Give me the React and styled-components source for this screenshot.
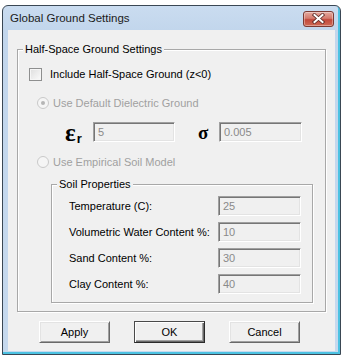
import React from 'react'
import styled, { createGlobalStyle } from 'styled-components'

const GlobalStyle = createGlobalStyle`
html, body {
margin:0;
padding:0;
background:#fff;
}
body {
font-family:"Liberation Sans", Arial, sans-serif;
font-size:11px;
color:#000;
}
`

const Window = styled.div`
box-sizing:border-box;
width:339px;
height:350px;
margin:5px 0 0 2px;
display:flex;
flex-direction:column;
border:1px solid #3a4754;
border-radius:6px 6px 0 0;
background:linear-gradient(#cadcf0, #c2d6ec 24px, #c6d9ee);
box-shadow:inset -2px -2px 0 #4cc2e2;
padding:0 5px 3px 5px;
`

const TitleBar = styled.div`
height:24px;
display:flex;
align-items:center;
justify-content:space-between;
padding:0 1px 0 2px;
`

const Title = styled.div`
font-size:11.5px;
color:#1b1b1b;
`

const CloseButton = styled.div`
box-sizing:border-box;
width:31px;
height:16px;
margin-top:1px;
display:flex;
align-items:center;
justify-content:center;
border:1px solid #7b3a33;
border-radius:3px;
background:linear-gradient(#e4a99f, #d47a6d 45%, #c2483b 55%, #cf6a55);
box-shadow:inset 0 0 0 1px rgba(255,255,255,0.35);
`

const Client = styled.div`
flex:1;
display:flex;
flex-direction:column;
background:#f0f0f0;
padding:13px 9px 0 9px;
`

const Group = styled.fieldset`
margin:${({ inner }) => inner ? '6px 12px 0 33px' : '0'};
padding:0;
border:1px solid #a8a8a8;
box-shadow:inset 1px 1px 0 #fff, 1px 1px 0 #fff;
min-width:0;
`

const Legend = styled.legend`
margin-left:5px;
padding:0 2px;
line-height:13px;
background:#f0f0f0;
`

const GroupBody = styled.div`
display:flex;
flex-direction:column;
padding:${({ inner }) => inner ? '5px 11px 8px 16px' : '8px 0 8px 0'};
`

const Row = styled.div`
display:flex;
align-items:center;
height:20px;
margin-top:${({ top }) => top || 0}px;
margin-left:${({ left }) => left || 0}px;
color:${({ disabled }) => disabled ? '#a0a0a0' : '#000'};
`

const CheckBox = styled.span`
box-sizing:border-box;
width:13px;
height:13px;
margin-right:8px;
border:1px solid #8e8f8f;
background:linear-gradient(135deg, #dedede, #fbfbfb);
box-shadow:inset 0 0 0 1px #f6f6f6;
`

const Radio = styled.span`
box-sizing:border-box;
width:12px;
height:12px;
margin-right:4px;
border-radius:50%;
border:1px solid #c9c9c9;
background:#f5f5f5;
display:flex;
align-items:center;
justify-content:center;
&::after{
content:"";
width:4px;
height:4px;
border-radius:50%;
background:${({ checked }) => checked ? '#b5b5b5' : 'transparent'};
}
`

const Symbol = styled.span`
box-sizing:border-box;
width:${({ w }) => w}px;
margin-left:${({ left }) => left || 0}px;
display:flex;
align-items:baseline;
font-family:"Liberation Serif", "DejaVu Serif", serif;
font-weight:bold;
color:#000;
line-height:1;
`

const Epsilon = styled.span`
font-size:25px;
`

const Sub = styled.span`
font-family:"Liberation Sans", Arial, sans-serif;
font-size:13px;
margin-left:1px;
position:relative;
top:2px;
`

const Sigma = styled.span`
font-size:19px;
padding-left:1px;
`

const Field = styled.div`
box-sizing:border-box;
width:${({ w }) => w}px;
height:20px;
display:flex;
align-items:center;
padding-left:4px;
background:#f0f0f0;
color:#8a8a8a;
border-top:1px solid #a0a0a0;
border-left:1px solid #a0a0a0;
border-bottom:1px solid #fff;
border-right:1px solid #fff;
box-shadow:inset 1px 1px 0 #767676, inset -1px -1px 0 #e3e3e3;
`

const PropRow = styled.div`
display:flex;
align-items:center;
justify-content:space-between;
height:20px;
margin-top:${({ first }) => first ? 0 : 6}px;
padding-left:1px;
`

const ButtonBar = styled.div`
display:flex;
gap:24px;
padding:9px 0 0 22px;
`

const Button = styled.div`
box-sizing:border-box;
width:71px;
height:22px;
display:flex;
align-items:center;
justify-content:center;
background:#f0f0f0;
border-top:1px solid ${({ primary }) => primary ? '#4a4a4a' : '#fff'};
border-left:1px solid ${({ primary }) => primary ? '#4a4a4a' : '#fff'};
border-bottom:1px solid ${({ primary }) => primary ? '#2a2a2a' : '#696969'};
border-right:1px solid ${({ primary }) => primary ? '#2a2a2a' : '#696969'};
box-shadow:${({ primary }) => primary
    ? 'inset 1px 1px 0 #fff, inset -1px -1px 0 #696969, inset -2px -2px 0 #a0a0a0'
    : 'inset 1px 1px 0 #e3e3e3, inset -1px -1px 0 #a0a0a0'};
`

const soilProps = [
    { label: "Temperature (C):", value: "25" },
    { label: "Volumetric Water Content %:", value: "10" },
    { label: "Sand Content %:", value: "30" },
    { label: "Clay Content %:", value: "40" },
]

const App = () => {
    return (
        <>
            <GlobalStyle />
            <Window>
                <TitleBar>
                    <Title>Global Ground Settings</Title>
                    <CloseButton>
                        <svg width="13" height="11" viewBox="0 0 13 11">
                            <path d="M2.5 2 L10.5 9 M10.5 2 L2.5 9" stroke="#5a2a25" strokeWidth="3.6" strokeLinecap="square" />
                            <path d="M2.5 2 L10.5 9 M10.5 2 L2.5 9" stroke="#fff" strokeWidth="2" strokeLinecap="square" />
                        </svg>
                    </CloseButton>
                </TitleBar>

                <Client>
                    <Group>
                        <Legend>Half-Space Ground Settings</Legend>
                        <GroupBody>
                            <Row left={11}>
                                <CheckBox />
                                Include Half-Space Ground (z&lt;0)
                            </Row>
                            <Row left={19} top={9} disabled>
                                <Radio checked />
                                Use Default Dielectric Ground
                            </Row>
                            <Row left={47} top={9}>
                                <Symbol w={28}>
                                    <Epsilon>ε</Epsilon>
                                    <Sub>r</Sub>
                                </Symbol>
                                <Field w={82}>5</Field>
                                <Symbol w={22} left={22}>
                                    <Sigma>σ</Sigma>
                                </Symbol>
                                <Field w={83}>0.005</Field>
                            </Row>
                            <Row left={19} top={10} disabled>
                                <Radio />
                                Use Empirical Soil Model
                            </Row>

                            <Group inner>
                                <Legend>Soil Properties</Legend>
                                <GroupBody inner>
                                    {soilProps.map((item, i) => (
                                        <PropRow key={item.label} first={i === 0}>
                                            {item.label}
                                            <Field w={83}>{item.value}</Field>
                                        </PropRow>
                                    ))}
                                </GroupBody>
                            </Group>
                        </GroupBody>
                    </Group>

                    <ButtonBar>
                        <Button>Apply</Button>
                        <Button primary>OK</Button>
                        <Button>Cancel</Button>
                    </ButtonBar>
                </Client>
            </Window>
        </>
    )
}

export default App
